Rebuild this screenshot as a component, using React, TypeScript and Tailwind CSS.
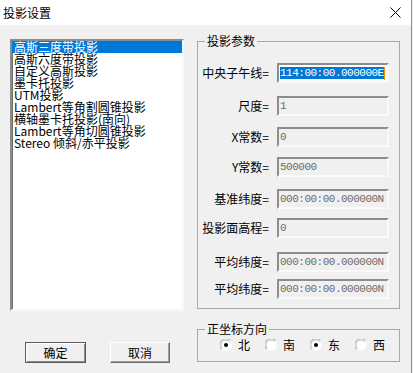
import React from 'react';

const cjk = { fontFamily: '"Noto Sans CJK SC", "Noto Sans", sans-serif' };
const mono = { fontFamily: '"Liberation Mono", "DejaVu Sans Mono", monospace' };

const projections = [
  '高斯三度带投影',
  '高斯六度带投影',
  '自定义高斯投影',
  '墨卡托投影',
  'UTM投影',
  'Lambert等角割圆锥投影',
  '横轴墨卡托投影(南向)',
  'Lambert等角切圆锥投影',
  'Stereo 倾斜/赤平投影',
];

const params = [
  { label: '尺度=', value: '1', mt: 'mt-[13px]' },
  { label: 'X常数=', value: '0', mt: 'mt-[11px]' },
  { label: 'Y常数=', value: '500000', mt: 'mt-[10px]' },
  { label: '基准纬度=', value: '000:00:00.000000N', mt: 'mt-[12px]' },
  { label: '投影面高程=', value: '0', mt: 'mt-[9px]' },
  { label: '平均纬度=', value: '000:00:00.000000N', mt: 'mt-[14px]' },
  { label: '平均纬度=', value: '000:00:00.000000N', mt: 'mt-[7px]' },
];

const directions = [
  { label: '北', checked: true },
  { label: '南', checked: false },
  { label: '东', checked: true },
  { label: '西', checked: false },
];

const Radio: React.FC<{ checked: boolean }> = ({ checked }) => (
  <svg width="12" height="12" viewBox="0 0 12 12">
    <circle cx="6" cy="6" r="5.5" fill="#ffffff" />
    <path d="M1.5 10.5 A6 6 0 0 1 10.5 1.5" fill="none" stroke="#a0a0a0" strokeWidth="1" />
    <path d="M2.5 9.5 A4.6 4.6 0 0 1 9.5 2.5" fill="none" stroke="#c8c8c8" strokeWidth="1" />
    <path d="M10.5 1.5 A6 6 0 0 1 1.5 10.5" fill="none" stroke="#f4f4f4" strokeWidth="1" />
    {checked && <circle cx="6" cy="6" r="2" fill="#000000" />}
  </svg>
);

const App: React.FC = () => {
  return (
    <div className="w-[413px] h-[373px] bg-[#f0f0f0] flex" style={cjk}>
      <div className="w-[411px] h-full flex flex-col">
        {/* title bar */}
        <div className="h-[25px] bg-white flex items-center justify-between pl-[3px] pr-[10px]">
          <span className="text-[12px] leading-[14px] text-black">投影设置</span>
          <svg width="11" height="11" viewBox="0 0 11 11">
            <path d="M0.5 0.5 L10.5 10.5 M10.5 0.5 L0.5 10.5" stroke="#000" strokeWidth="1" />
          </svg>
        </div>

        <div className="flex pl-[10px] gap-[13px]">
          {/* left column */}
          <div className="flex flex-col pt-[14px]">
            <div className="w-[174px] h-[272px] bg-white border-2 border-t-[#8c8c8c] border-l-[#8c8c8c] border-b-[#f8f8f8] border-r-[#f8f8f8] shadow-[inset_1px_1px_0_#6e6e6e]">
              {projections.map((p, i) => (
                <div
                  key={i}
                  className={`h-[12px] leading-[12px] text-[12px] pl-[2px] whitespace-nowrap ${
                    i === 0 ? 'bg-[#0078d7] text-white' : 'text-black'
                  }`}
                >
                  {p}
                </div>
              ))}
            </div>
            <div className="flex mt-[31px] ml-[15px] gap-[24px]">
              <button className="w-[61px] h-[21px] text-[12px] leading-[12px] text-black bg-[#f0f0f0] border border-[#5a5a5a] shadow-[inset_1px_1px_0_#ffffff,inset_-1px_-1px_0_#8a8a8a]">
                确定
              </button>
              <button className="w-[60px] h-[21px] text-[12px] leading-[12px] text-black bg-[#f0f0f0] border border-t-white border-l-white border-b-[#6b6b6b] border-r-[#6b6b6b] shadow-[inset_-1px_-1px_0_#a0a0a0]">
                取消
              </button>
            </div>
          </div>

          {/* right column */}
          <div className="flex flex-col pt-[9px]">
            <fieldset className="w-[203px] h-[275px] border border-[#a8a8a8]">
              <legend className="ml-[7px] px-[2px] text-[12px] leading-[14px] text-black">投影参数</legend>
              <div className="flex items-center mt-[15px] h-[20px]">
                <span className="w-[71px] text-right text-[12px] leading-[14px] text-black whitespace-nowrap">中央子午线=</span>
                <div className="ml-[8px] w-[112px] h-[20px] bg-white border-2 border-t-[#8c8c8c] border-l-[#8c8c8c] border-b-[#f8f8f8] border-r-[#f8f8f8] flex items-center pl-[1px]">
                  <span className="bg-[#0078d7] text-white text-[11px] leading-[12px] tracking-[-0.5px]" style={mono}>
                    114:00:00.000000E
                  </span>
                  <span className="w-[1px] h-[13px] bg-[#ff8a00]" />
                </div>
              </div>
              {params.map((p, i) => (
                <div key={i} className={`flex items-center h-[20px] ${p.mt}`}>
                  <span className="w-[71px] text-right text-[12px] leading-[14px] text-black whitespace-nowrap">{p.label}</span>
                  <div className="ml-[8px] w-[112px] h-[20px] bg-[#f0f0f0] border-2 border-t-[#8c8c8c] border-l-[#8c8c8c] border-b-[#fafafa] border-r-[#fafafa] flex items-center pl-[1px]">
                    <span className="text-[#6d6d6d] text-[11px] leading-[12px] tracking-[-0.5px] whitespace-nowrap" style={mono}>
                      {p.value}
                    </span>
                  </div>
                </div>
              ))}
            </fieldset>

            <fieldset className="mt-[13px] w-[203px] h-[40px] border border-[#a8a8a8]">
              <legend className="ml-[7px] px-[2px] text-[12px] leading-[14px] text-black">正坐标方向</legend>
              <div className="flex items-center mt-[3px] pl-[22px] gap-[15px] h-[12px]">
                {directions.map(d => (
                  <div key={d.label} className="flex items-center gap-[6px]">
                    <Radio checked={d.checked} />
                    <span className="text-[12px] leading-[12px] text-black">{d.label}</span>
                  </div>
                ))}
              </div>
            </fieldset>
          </div>
        </div>
      </div>
      <div className="w-[1px] h-full bg-[#8c8c8c]" />
    </div>
  );
};

export default App;
